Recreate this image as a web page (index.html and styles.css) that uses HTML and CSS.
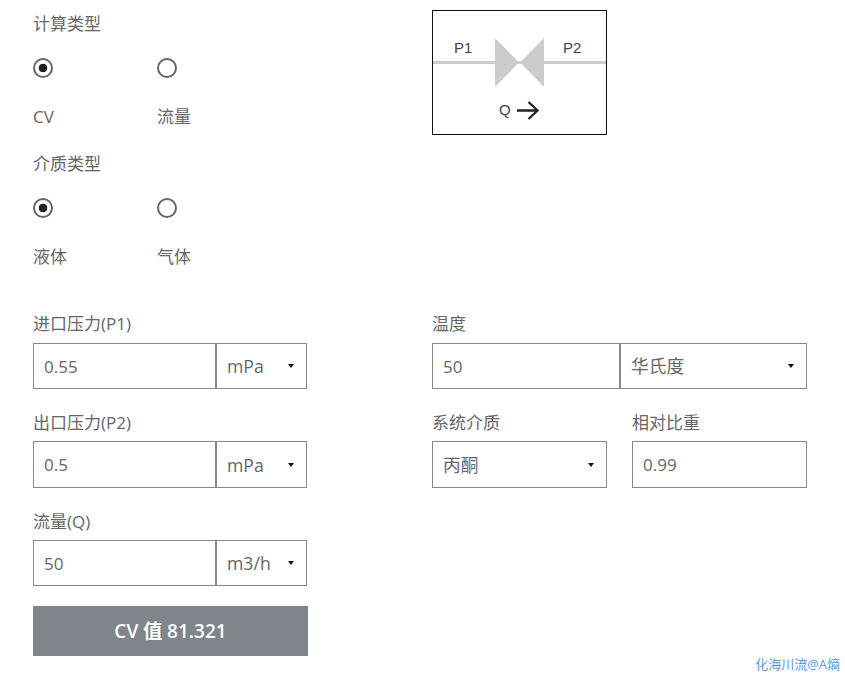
FILE: index.html
```html
<!DOCTYPE html>
<html lang="zh-CN">
<head>
    <meta charset="UTF-8">
    <meta name="viewport" content="width=device-width, initial-scale=1.0">
    <title>CV值计算</title>
    <link rel="stylesheet" href="styles.css">
</head>
<body>
    <form class="page">
        <!-- 计算类型 / 介质类型 + 阀门示意图 -->
        <div class="top">
            <div class="types">
                <div class="lbl">计算类型</div>
                <div class="radioRow">
                    <label class="opt"><input class="rad" type="radio" name="calc" checked><span>CV</span></label>
                    <label class="opt"><input class="rad" type="radio" name="calc"><span>流量</span></label>
                </div>
                <div class="lbl">介质类型</div>
                <div class="radioRow">
                    <label class="opt"><input class="rad" type="radio" name="medium" checked><span>液体</span></label>
                    <label class="opt"><input class="rad" type="radio" name="medium"><span>气体</span></label>
                </div>
            </div>
            <svg class="diagram" width="175" height="125" viewBox="0 0 175 125">
                <rect x="0.5" y="0.5" width="174" height="124" fill="#fff" stroke="#111"/>
                <path d="M1 52.5H174" stroke="#ccc" stroke-width="3"/>
                <path d="M63 28L87 52.5L63 77Z M112 28L88 52.5L112 77Z" fill="#ccc"/>
                <text class="dgText" x="22" y="43">P1</text>
                <text class="dgText" x="131" y="43">P2</text>
                <text class="dgText" x="67" y="105">Q</text>
                <path d="M85 100.500H105M96.500 92L105.500 100.500L96.500 109" fill="none" stroke="#222" stroke-width="2.300"/>
            </svg>
        </div>

        <div class="fields">
            <div class="col colLeft">
                <div class="field first">
                    <label class="lbl">进口压力(P1)</label>
                    <div class="group">
                        <input class="ipt" type="text" value="0.55">
                        <div class="sel unit"><select><option>mPa</option></select></div>
                    </div>
                </div>
                <div class="field">
                    <label class="lbl">出口压力(P2)</label>
                    <div class="group tall">
                        <input class="ipt" type="text" value="0.5">
                        <div class="sel unit"><select><option>mPa</option></select></div>
                    </div>
                </div>
                <div class="field">
                    <label class="lbl">流量(Q)</label>
                    <div class="group">
                        <input class="ipt" type="text" value="50">
                        <div class="sel unit"><select><option>m3/h</option></select></div>
                    </div>
                </div>
                <button class="btnCv" type="button">CV 值 81.321</button>
            </div>

            <div class="col colRight">
                <div class="field first">
                    <label class="lbl">温度</label>
                    <div class="group">
                        <input class="ipt iptTemp" type="text" value="50">
                        <div class="sel grow"><select><option>华氏度</option></select></div>
                    </div>
                </div>
                <div class="pair">
                    <div class="field">
                        <label class="lbl">系统介质</label>
                        <div class="group tall">
                            <div class="sel grow"><select><option>丙酮</option></select></div>
                        </div>
                    </div>
                    <div class="field">
                        <label class="lbl">相对比重</label>
                        <div class="group tall">
                            <input class="ipt" type="text" value="0.99">
                        </div>
                    </div>
                </div>
            </div>
        </div>
    </form>
    <div class="mark">化海川流@A熵</div>
</body>
</html>
```

FILE: styles.css
```css
/* 页面 */
body {
    margin: 0;
    height: 676px;
    overflow: hidden;
    position: relative;
    background-color: #fff;
    color: #666;
    font-family: "Open Sans", "Noto Sans CJK SC", sans-serif;
    font-size: 17px;
}

.page {
    padding: 11px 38px 0 33px;
}

.top {
    display: flex;
    height: 257px;
}

.types {
    width: 399px;
}

.lbl {
    display: block;
    height: 24px;
    line-height: 26px;
}

/* 单选 */
.radioRow {
    display: flex;
    margin-bottom: 23px;
}

.opt {
    display: flex;
    flex-direction: column;
    width: 124px;
    padding-top: 23px;
}

.opt span {
    height: 24px;
    line-height: 26px;
    margin-top: 26px;
}

.rad {
    appearance: none;
    width: 20px;
    height: 20px;
    margin: 0;
    border: 2px solid #666;
    border-radius: 50%;
    background-color: #fff;
}

.rad:checked {
    background: radial-gradient(circle, #222 0, #222 4px, #fff 4.6px);
}

/* 示意图 */
.diagram {
    display: block;
    margin-top: -1px;
}

.dgText {
    font-family: "Liberation Sans", sans-serif;
    font-size: 15px;
    fill: #444;
}

/* 表单区 */
.fields {
    display: flex;
    padding-top: 43px;
}

.colLeft {
    width: 274px;
    margin-right: 125px;
}

.colRight {
    width: 375px;
}

.field {
    margin-bottom: 21px;
}

.field .lbl {
    margin-bottom: 7px;
}

.field.first .lbl {
    margin-bottom: 8px;
}

.group {
    display: flex;
    height: 46px;
}

.group.tall {
    height: 47px;
}

.ipt {
    flex: 1;
    min-width: 0;
    box-sizing: border-box;
    height: 100%;
    padding: 0 10px;
    border: 1px solid #888;
    border-radius: 0;
    outline: none;
    background-color: #fff;
    color: #666;
    font: inherit;
}

.iptTemp {
    flex: none;
    width: 188px;
}

/* 下拉框 */
.sel {
    position: relative;
    box-sizing: border-box;
    height: 100%;
}

.sel.unit {
    width: 91px;
}

.sel.grow {
    flex: 1;
}

.sel select {
    appearance: none;
    box-sizing: border-box;
    width: 100%;
    height: 100%;
    padding: 0 10px;
    border: 1px solid #888;
    border-radius: 0;
    outline: none;
    background-color: #fff;
    color: #666;
    font: inherit;
    font-size: 17.700px;
}

.sel::after {
    content: "";
    position: absolute;
    right: 13px;
    top: 50%;
    margin-top: -2px;
    border-style: solid;
    border-width: 4px 3.500px 0;
    border-color: #111 transparent transparent;
}

.pair {
    display: grid;
    grid-template-columns: 175px 175px;
    column-gap: 25px;
}

/* 按钮 */
.btnCv {
    display: block;
    width: 275px;
    height: 50px;
    margin-top: -1px;
    padding: 0 0 2px;
    border: none;
    background-color: #7f858a;
    color: #fff;
    font: inherit;
    font-size: 19px;
    font-weight: 600;
}

/* 水印 */
.mark {
    position: absolute;
    right: 5px;
    top: 656px;
    color: #5a9bd4;
    font-size: 13px;
    line-height: 17px;
}
```
